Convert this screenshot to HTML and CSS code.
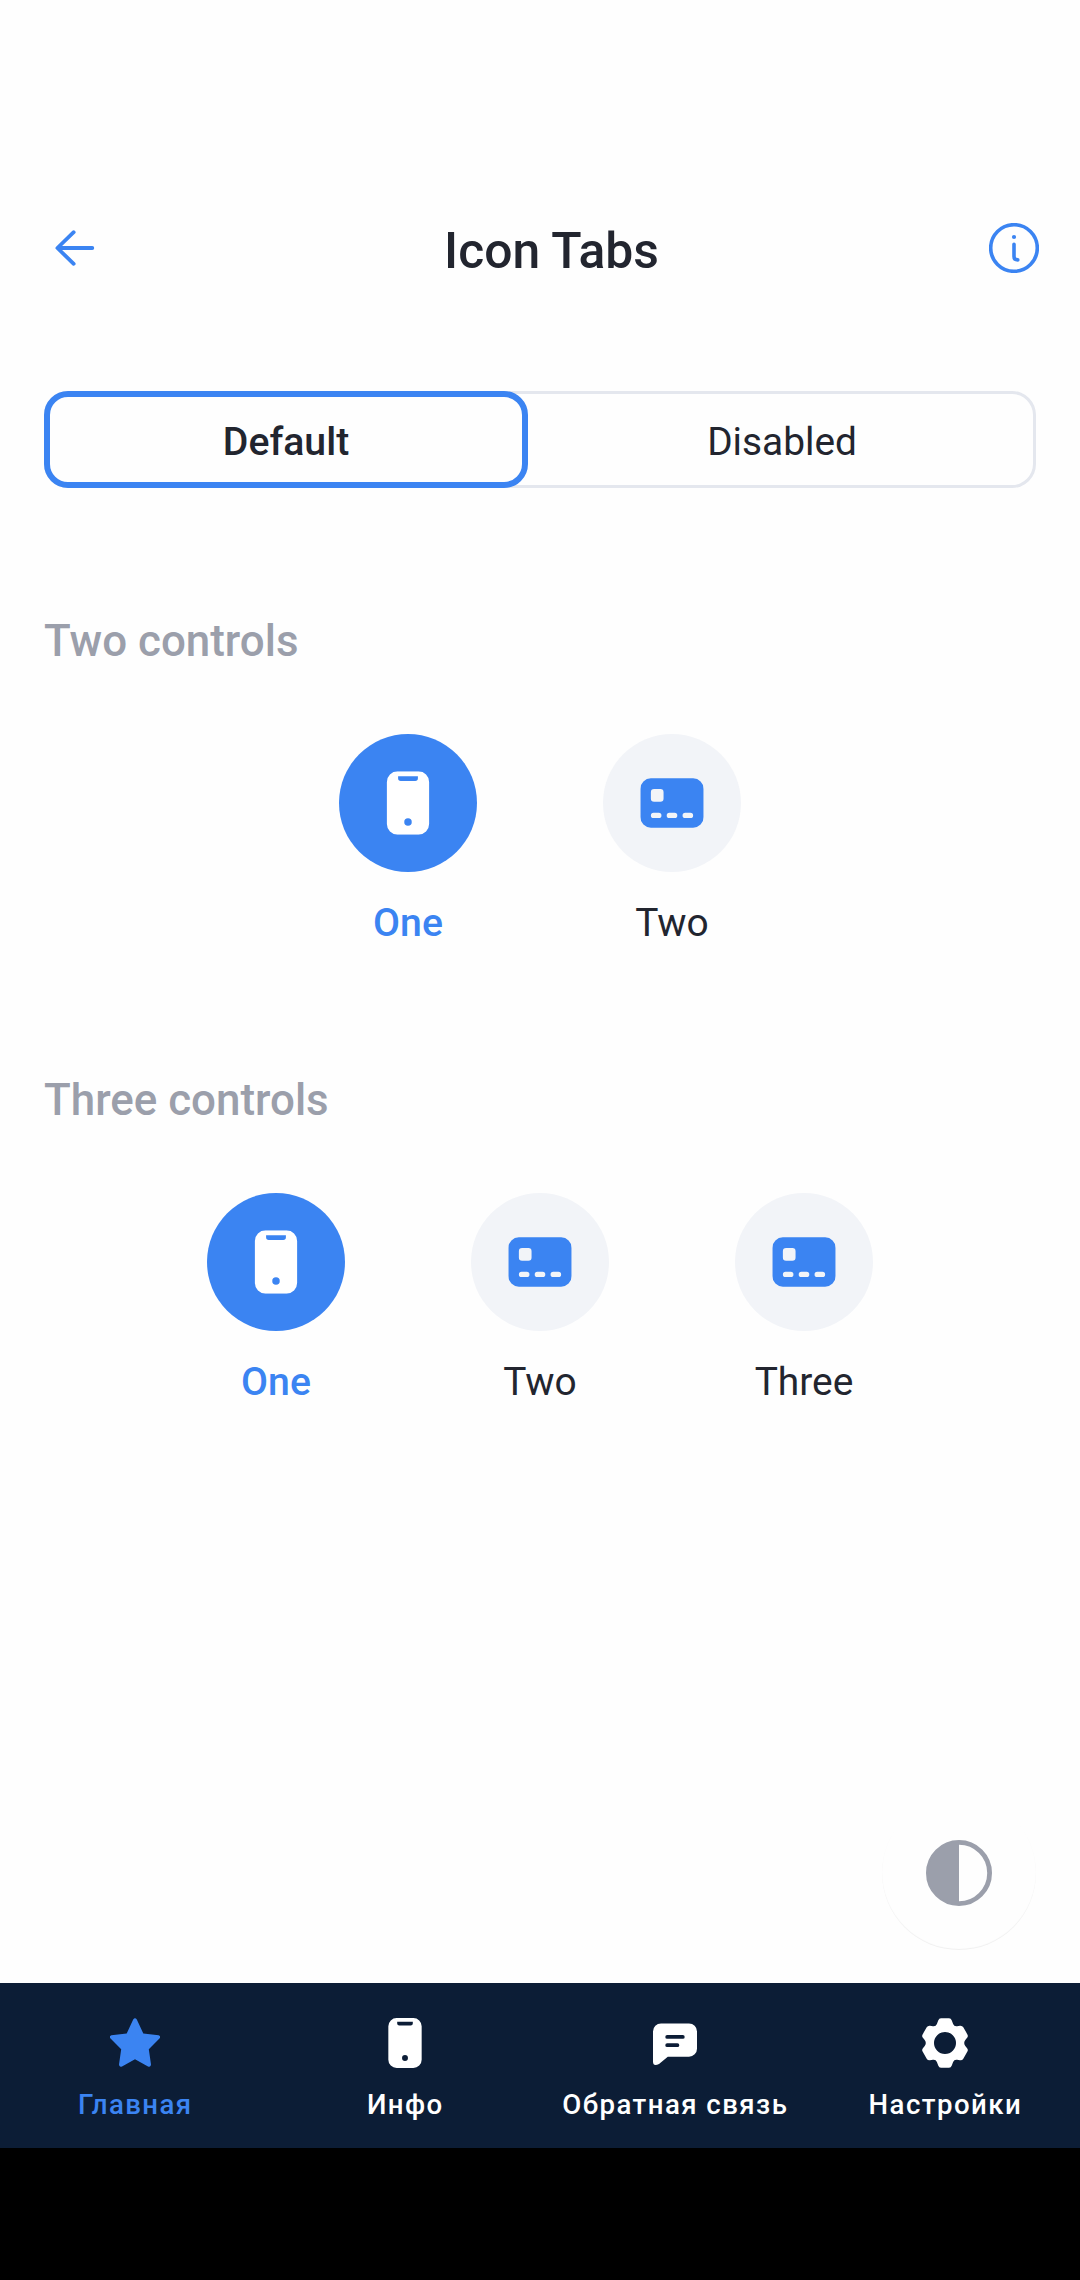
FILE: index.html
```html
<!DOCTYPE html>
<html lang="ru">
<head>
<meta charset="utf-8">
<title>Icon Tabs</title>
<link rel="stylesheet" href="styles.css">
</head>
<body>
<svg width="0" height="0" class="sprite">
  <symbol id="phone" viewBox="0 0 24 24">
    <path fill-rule="evenodd" d="M8 0h8a4 4 0 0 1 4 4v16a4 4 0 0 1-4 4H8a4 4 0 0 1-4-4V4a4 4 0 0 1 4-4zM8.25 1.85v.8a1 1 0 0 0 1 1h5.5a1 1 0 0 0 1-1v-.8zM12 17.8a1.42 1.42 0 1 0 0 2.84 1.42 1.42 0 0 0 0-2.84z"/>
  </symbol>
  <symbol id="card" viewBox="0 0 24 24">
    <path fill-rule="evenodd" d="M4 2.65h16a4 4 0 0 1 4 4v10.7a4 4 0 0 1-4 4H4a4 4 0 0 1-4-4V6.65a4 4 0 0 1 4-4zM5.2 6.7A1.2 1.2 0 0 0 4 7.9v2.4a1.2 1.2 0 0 0 1.2 1.2h2.4a1.2 1.2 0 0 0 1.2-1.2V7.9a1.2 1.2 0 0 0-1.2-1.2zM5 15.7a1 1 0 0 0 0 2h2a1 1 0 0 0 0-2zM11 15.7a1 1 0 0 0 0 2h2a1 1 0 0 0 0-2zM17 15.7a1 1 0 0 0 0 2h2a1 1 0 0 0 0-2z"/>
  </symbol>
</svg>
<div class="screen">
  <header class="header">
    <svg class="back" viewBox="0 0 40 36"><path d="M37.3 18H3M18.7 2.2 2.4 18l16.3 15.8"/></svg>
    <h1 class="title">Icon Tabs</h1>
    <svg class="info" viewBox="0 0 50 50"><circle cx="25" cy="25" r="23.3"/><path d="M25 21.3v12.2q0 3.4 3.8 3.4"/><circle class="dot" cx="25" cy="14" r="2.1"/></svg>
  </header>
  <main class="content">
    <div class="segments">
      <div class="segment active">Default</div>
      <div class="segment">Disabled</div>
    </div>
    <section class="group">
      <h2 class="caption">Two controls</h2>
      <div class="tabs">
        <div class="tab selected"><span class="disc"><svg viewBox="0 0 25 25"><use href="#phone" x=".5" y=".5" width="24" height="24"/></svg></span><span class="label">One</span></div>
        <div class="tab"><span class="disc"><svg viewBox="0 0 25 25"><use href="#card" x=".5" y=".5" width="24" height="24"/></svg></span><span class="label">Two</span></div>
      </div>
    </section>
    <section class="group">
      <h2 class="caption">Three controls</h2>
      <div class="tabs">
        <div class="tab selected"><span class="disc"><svg viewBox="0 0 25 25"><use href="#phone" x=".5" y=".5" width="24" height="24"/></svg></span><span class="label">One</span></div>
        <div class="tab"><span class="disc"><svg viewBox="0 0 25 25"><use href="#card" x=".5" y=".5" width="24" height="24"/></svg></span><span class="label">Two</span></div>
        <div class="tab"><span class="disc"><svg viewBox="0 0 25 25"><use href="#card" x=".5" y=".5" width="24" height="24"/></svg></span><span class="label">Three</span></div>
      </div>
    </section>
  </main>
  <div class="fab"><svg viewBox="0 0 66 66"><circle cx="33" cy="33" r="30.6"/><path d="M33 2a31 31 0 0 0 0 62z"/></svg></div>
  <nav class="nav">
    <div class="item current"><svg viewBox="0 0 50 50"><path d="M23.2 1.5Q25-.9 26.8 1.5L33.3 15.4 48.6 17.3Q51 18.2 49.7 20.3L38.8 31.2 41 46.6Q40.9 49.4 38 48.4L25 41.3 12 48.4Q9.1 49.4 9 46.6L11.2 31.2.3 20.3Q-1 18.2 1.4 17.3L16.7 15.4z"/></svg><span>Главная</span></div>
    <div class="item"><svg><use href="#phone"/></svg><span>Инфо</span></div>
    <div class="item"><svg viewBox="0 0 50 50"><path fill-rule="evenodd" d="M11 5.5h28a8 8 0 0 1 8 8v17.2a8 8 0 0 1-8 8H17.8L9 46.1Q3 49 3 43.5v-30a8 8 0 0 1 8-8zM17.2 17a1.9 1.9 0 0 0 0 3.8h15.6a1.9 1.9 0 0 0 0-3.8zM17.2 25.3a1.9 1.9 0 0 0 0 3.8h10.2a1.9 1.9 0 0 0 0-3.8z"/></svg><span>Обратная связь</span></div>
    <div class="item"><svg viewBox="0 0 50 50"><path fill-rule="evenodd" d="M21 .2h8q2 0 2.8 2.2l1.3 3.6q1.1 2.7 4 2.2l2.9-.4q2.3-.2 3.3 1.5l4.1 7.1q1 1.7-.3 3.4l-1.8 2.3q-2.2 2.9 0 5.8l1.8 2.3q1.3 1.7.3 3.4l-4.1 7.1q-1 1.7-3.3 1.5l-2.9-.4q-2.9-.5-4 2.2l-1.3 3.6q-.8 2.2-2.8 2.2h-8q-2 0-2.8-2.2l-1.3-3.6q-1.1-2.7-4-2.2l-2.9.4q-2.3.2-3.3-1.5l-4.1-7.1q-1-1.7.3-3.4l1.8-2.3q2.2-2.9 0-5.8l-1.8-2.3q-1.3-1.7-.3-3.4l4.1-7.1q1-1.7 3.3-1.5l2.9.4q2.9.5 4-2.2l1.3-3.6Q19 .2 21 .2zM25 14a11 11 0 1 0 0 22 11 11 0 0 0 0-22z"/></svg><span>Настройки</span></div>
  </nav>
  <div class="system-bar"></div>
</div>
</body>
</html>
```
FILE: styles.css
```css
* { box-sizing: border-box; }
body { margin: 0; background: #fefefe; color: #22252f; font-family: Roboto, "Noto Sans", sans-serif; }
.sprite { position: absolute; }
.screen { position: relative; width: 1080px; height: 2280px; display: flex; flex-direction: column; }
.header { height: 391px; padding: 223px 41px 0 55px; display: flex; align-items: flex-start; justify-content: space-between; }
.back { width: 40px; height: 36px; margin-top: 7.3px; fill: none; stroke: #3b84f2; stroke-width: 3.8; stroke-linecap: round; stroke-linejoin: round; }
.title { margin: 0 -19px 0 0; font-size: 49.8px; line-height: 56px; font-weight: 500; }
.info { width: 50px; height: 50px; fill: none; stroke: #3b84f2; stroke-width: 3.6; stroke-linecap: round; }
.info .dot { fill: #3b84f2; stroke: none; }
.content { flex: 1; padding: 0 44px; }
.segments { height: 97px; display: flex; border-radius: 24px; box-shadow: inset 0 0 0 3px #e4e7ee; }
.segment { flex: 1; display: flex; align-items: center; justify-content: center; padding-top: 5px; font-size: 38.8px; line-height: 46px; }
.segment.active { flex: 0 0 484px; border: 6px solid #3b84f2; border-radius: 24px; background: #fefefe; font-size: 39.2px; font-weight: 500; }
.group { height: 459px; padding-top: 127px; }
.caption { margin: 0; font-size: 43.9px; line-height: 52px; font-weight: 500; color: #9b9fab; }
.tabs { margin-top: 67px; display: flex; justify-content: center; }
.tab { width: 264px; display: flex; flex-direction: column; align-items: center; }
.disc { width: 138px; height: 138px; border-radius: 50%; background: #f2f4f8; display: flex; align-items: center; justify-content: center; }
.disc svg { width: 66px; height: 66px; fill: #3b84f2; }
.label { margin-top: 28px; font-size: 38.9px; line-height: 46px; }
.selected .disc { background: #3b84f2; }
.selected .disc svg { fill: #fff; }
.selected .label { color: #3b84f2; font-size: 39.2px; font-weight: 500; }
.fab { position: absolute; left: 882px; top: 1796px; width: 154px; height: 154px; border-radius: 50%; background: #fefefe; box-shadow: inset 0 -1px 1px rgba(0,0,0,.06); display: flex; align-items: center; justify-content: center; }
.fab svg { width: 66px; height: 66px; fill: #9b9fab; }
.fab circle { fill: none; stroke: #9b9fab; stroke-width: 4.8; }
.nav { height: 165px; background: #0c1d36; color: #fff; display: flex; }
.item { width: 270px; padding-top: 35px; display: flex; flex-direction: column; align-items: center; font-size: 27.6px; line-height: 32px; font-weight: 500; letter-spacing: 1.45px; white-space: nowrap; }
.item svg { width: 50px; height: 50px; margin-bottom: 21px; fill: #fff; }
.item span { padding-left: 0.7px; }
.current { color: #3b84f2; }
.current svg { fill: #3b84f2; }
.system-bar { height: 132px; background: #000; }
```
